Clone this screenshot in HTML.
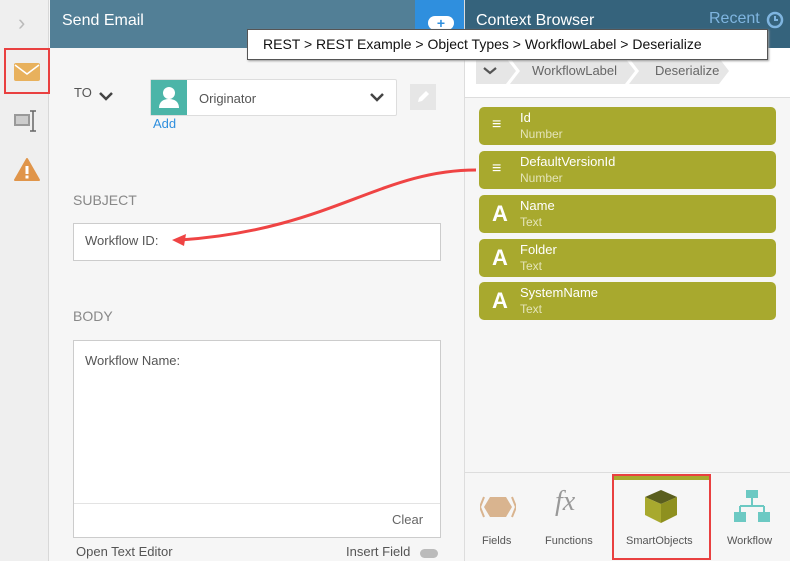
<!DOCTYPE html>
<html><head><style>
*{margin:0;padding:0;box-sizing:border-box}
body{width:790px;height:561px;overflow:hidden;font-family:"Liberation Sans",sans-serif;background:#f6f6f6;position:relative}
.a{position:absolute}
.item{position:absolute;left:479px;width:297px;height:38px;background:#a8a92e;border-radius:5px;color:#fff}
.item .t{position:absolute;left:41px;top:3px;font-size:13px}
.item .s{position:absolute;left:41px;top:20px;font-size:12px;color:#e4e4b8}
.item .ic{position:absolute;left:13px;top:6px;font-size:22px;font-weight:bold}
.tab{position:absolute;top:535px;font-size:11px;color:#555}
</style></head><body>
<div class="a" style="left:0;top:0;width:49px;height:561px;background:#efefef;border-right:1px solid #d8d8d8"></div>
<div class="a" style="left:18px;top:10px;color:#bbb;font-size:22px">&#8250;</div>
<div class="a" style="left:4px;top:48px;width:46px;height:46px;border:2px solid #e94040"></div>
<div class="a" style="left:14px;top:63px;width:26px;height:18px;background:#e8b15d;border-radius:2px"></div>
<svg class="a" style="left:14px;top:63px" width="26" height="18"><path d="M1 2 L13 11 L25 2" stroke="#fff" stroke-width="1.5" fill="none"/></svg>
<svg class="a" style="left:12px;top:108px" width="28" height="26"><rect x="2" y="6" width="16" height="12" fill="#999"/><rect x="4" y="8" width="12" height="8" fill="#ccc"/><path d="M21 3v20M18 3h6M18 23h6" stroke="#666" stroke-width="1.5"/></svg>
<svg class="a" style="left:13px;top:157px" width="28" height="26"><path d="M14 2 L26 23 L2 23 Z" fill="#e0954a" stroke="#e0954a" stroke-linejoin="round" stroke-width="2"/><rect x="12.5" y="9" width="3" height="8" fill="#fff"/><rect x="12.5" y="18.5" width="3" height="3" fill="#fff"/></svg>

<div class="a" style="left:50px;top:0;width:415px;height:48px;background:#527f96"></div>
<div class="a" style="left:62px;top:12px;color:#fff;font-size:16px">Send Email</div>
<div class="a" style="left:415px;top:0;width:50px;height:48px;background:#2f8fde"></div>
<div class="a" style="left:428px;top:16px;width:26px;height:14px;background:#fff;border-radius:7px;color:#2f8fde;font-weight:bold;text-align:center;font-size:14px;line-height:14px">+</div>
<div class="a" style="left:464px;top:0;width:1px;height:561px;background:#ddd"></div>

<div class="a" style="left:74px;top:85px;color:#555;font-size:13px">TO</div>
<svg class="a" style="left:98px;top:90px" width="16" height="12"><path d="M2 3l6 6 6-6" stroke="#444" stroke-width="2.5" fill="none"/></svg>
<div class="a" style="left:150px;top:79px;width:247px;height:37px;background:#fff;border:1px solid #ddd;border-radius:2px"></div>
<div class="a" style="left:151px;top:80px;width:36px;height:35px;background:#4cb5a8"></div>
<svg class="a" style="left:157px;top:84px" width="24" height="26"><circle cx="12" cy="9" r="6" fill="#fff"/><path d="M2 24c0-6 4-9 10-9s10 3 10 9z" fill="#fff"/></svg>
<div class="a" style="left:199px;top:91px;color:#555;font-size:13px">Originator</div>
<svg class="a" style="left:369px;top:91px" width="16" height="12"><path d="M2 3l6 6 6-6" stroke="#444" stroke-width="2.5" fill="none"/></svg>
<div class="a" style="left:153px;top:116px;color:#2f8fde;font-size:13px">Add</div>
<div class="a" style="left:410px;top:84px;width:26px;height:26px;background:#e6e6e6"></div>
<svg class="a" style="left:415px;top:89px" width="16" height="16"><path d="M3 13l1-4 7-7 3 3-7 7z" fill="#fff"/></svg>

<div class="a" style="left:73px;top:192px;color:#888;font-size:14px">SUBJECT</div>
<div class="a" style="left:73px;top:223px;width:368px;height:38px;background:#fff;border:1px solid #ccc"></div>
<div class="a" style="left:85px;top:233px;color:#555;font-size:13px">Workflow ID:</div>
<div class="a" style="left:73px;top:308px;color:#888;font-size:14px">BODY</div>
<div class="a" style="left:73px;top:340px;width:368px;height:198px;background:#fff;border:1px solid #ccc"></div>
<div class="a" style="left:74px;top:503px;width:366px;height:1px;background:#e3e3e3"></div>
<div class="a" style="left:85px;top:353px;color:#555;font-size:13px">Workflow Name:</div>
<div class="a" style="left:392px;top:512px;color:#666;font-size:13px">Clear</div>
<div class="a" style="left:76px;top:544px;color:#555;font-size:13px">Open Text Editor</div>
<div class="a" style="left:346px;top:544px;color:#555;font-size:13px">Insert Field</div>
<div class="a" style="left:420px;top:549px;width:18px;height:9px;background:#bbb;border-radius:5px"></div>

<div class="a" style="left:465px;top:0;width:325px;height:48px;background:#35637c"></div>
<div class="a" style="left:476px;top:12px;color:#fff;font-size:16px">Context Browser</div>
<div class="a" style="left:709px;top:10px;color:#7fb5e0;font-size:16px">Recent</div>
<svg class="a" style="left:765px;top:10px" width="20" height="20"><circle cx="10" cy="10" r="7" fill="none" stroke="#7fb5e0" stroke-width="2.5"/><path d="M10 6v4h3" stroke="#7fb5e0" stroke-width="2" fill="none"/></svg>
<div class="a" style="left:465px;top:48px;width:325px;height:50px;background:#fff;border-bottom:1px solid #ddd"></div>
<svg class="a" style="left:476px;top:58px" width="270" height="26"><path d="M0 0h30l10 13-10 13H0z" fill="#e6e6e6"/><path d="M34 0h115l10 13-10 13H34l10-13z" fill="#e6e6e6"/><path d="M153 0h90l10 13-10 13h-90l10-13z" fill="#e6e6e6"/><path d="M8 10l6 5 6-5" stroke="#555" stroke-width="2.2" fill="none"/></svg>
<div class="a" style="left:532px;top:63px;color:#666;font-size:13px">WorkflowLabel</div>
<div class="a" style="left:655px;top:63px;color:#666;font-size:13px">Deserialize</div>

<div class="item" style="top:107px"><div class="ic" style="font-size:16px;top:9px">&#8801;</div><div class="t">Id</div><div class="s">Number</div></div>
<div class="item" style="top:151px"><div class="ic" style="font-size:16px;top:9px">&#8801;</div><div class="t">DefaultVersionId</div><div class="s">Number</div></div>
<div class="item" style="top:195px"><div class="ic">A</div><div class="t">Name</div><div class="s">Text</div></div>
<div class="item" style="top:239px"><div class="ic">A</div><div class="t">Folder</div><div class="s">Text</div></div>
<div class="item" style="top:282px"><div class="ic">A</div><div class="t">SystemName</div><div class="s">Text</div></div>

<div class="a" style="left:465px;top:472px;width:325px;height:1px;background:#ddd"></div>
<svg class="a" style="left:480px;top:495px" width="36" height="24"><path d="M10 2h16l6 10-6 10H10L4 12z" fill="#d9b48f"/><path d="M4 2 0 12l4 10M32 2l4 10-4 10" stroke="#d9b48f" stroke-width="2" fill="none"/></svg>
<div class="a" style="left:555px;top:486px;color:#999;font-size:28px;font-style:italic;font-family:'Liberation Serif',serif">fx</div>
<div class="a" style="left:612px;top:474px;width:99px;height:86px;border:2px solid #e94040"></div>
<div class="a" style="left:614px;top:476px;width:95px;height:4px;background:#a8a92e"></div>
<svg class="a" style="left:643px;top:488px" width="36" height="38"><path d="M18 2 34 9 18 16 2 9z" fill="#5a5e1e"/><path d="M2 9v18l16 8V16z" fill="#a8a92e"/><path d="M34 9v18l-16 8V16z" fill="#8e901f"/></svg>
<svg class="a" style="left:734px;top:488px" width="36" height="38"><rect x="12" y="2" width="12" height="8" fill="#6cc9c3"/><path d="M18 10v8M6 18h24M6 18v8M30 18v8" stroke="#6cc9c3" stroke-width="2"/><rect x="0" y="24" width="12" height="10" fill="#6cc9c3"/><rect x="24" y="24" width="12" height="10" fill="#6cc9c3"/></svg>
<div class="tab" style="left:482px">Fields</div>
<div class="tab" style="left:545px">Functions</div>
<div class="tab" style="left:626px">SmartObjects</div>
<div class="tab" style="left:727px">Workflow</div>

<div class="a" style="left:247px;top:29px;width:521px;height:31px;background:#fff;border:1px solid #555;box-shadow:1px 1px 2px #999"></div>
<div class="a" style="left:263px;top:36px;color:#111;font-size:14px">REST &gt; REST Example &gt; Object Types &gt; WorkflowLabel &gt; Deserialize</div>

<svg class="a" style="left:0;top:0" width="790" height="561"><path d="M476 170 C380 170 330 230 180 240" stroke="#ef4444" stroke-width="3" fill="none"/><path d="M172 240 L186 234 L184 246 Z" fill="#ef4444"/></svg>
</body></html>
